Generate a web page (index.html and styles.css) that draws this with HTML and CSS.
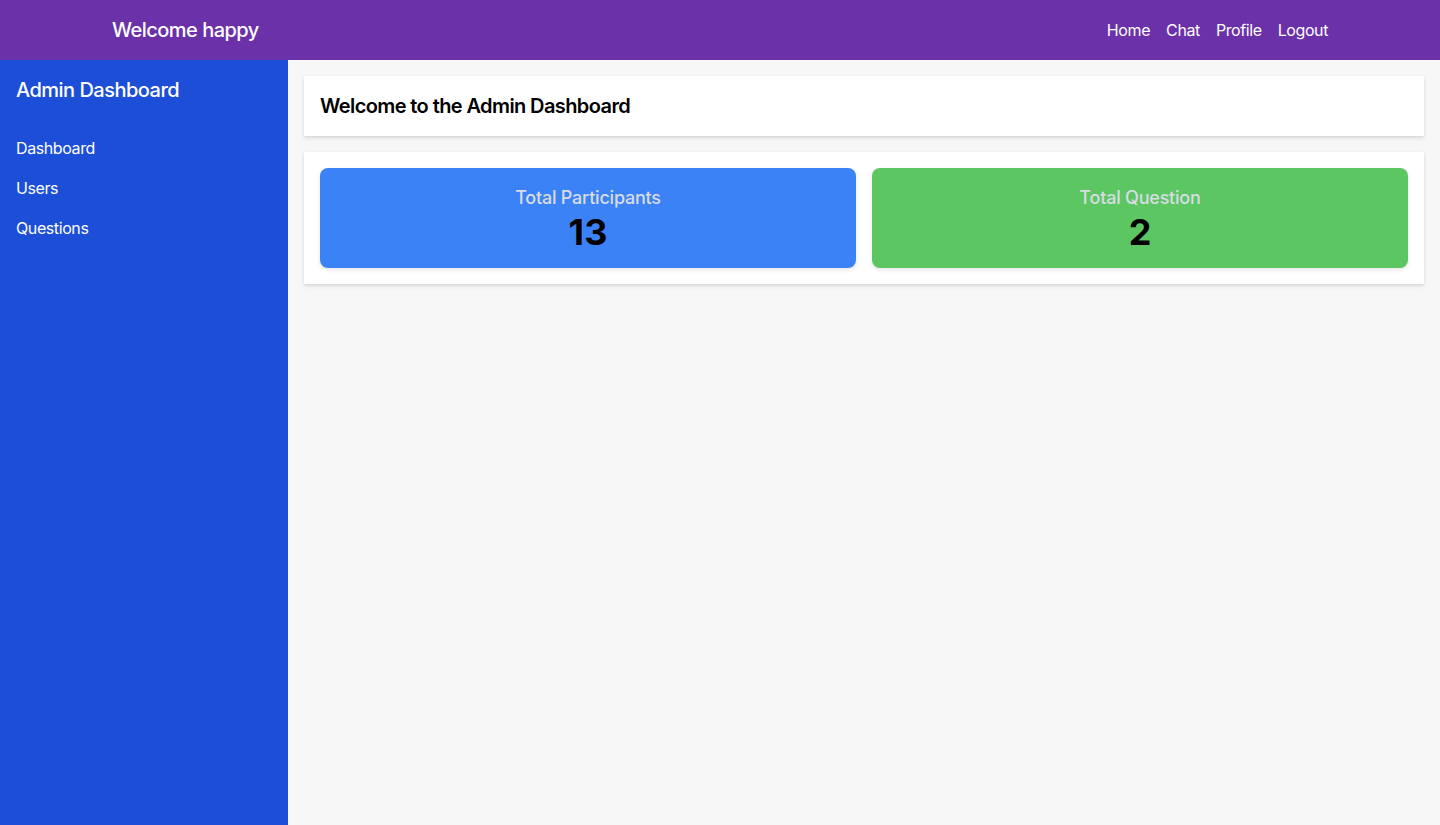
FILE: index.html
```html
<!DOCTYPE html>
<html lang="en">
<head>
<meta charset="utf-8">
<title>Admin Dashboard</title>
<link rel="stylesheet" href="styles.css">
</head>
<body>
<nav class="topbar">
  <div class="topbar-inner">
    <div class="brand">Welcome happy</div>
    <div class="links">
      <a href="#">Home</a>
      <a href="#">Chat</a>
      <a href="#">Profile</a>
      <a href="#">Logout</a>
    </div>
  </div>
</nav>
<div class="layout">
  <aside class="sidebar">
    <h2 class="side-title">Admin Dashboard</h2>
    <ul class="side-links">
      <li><a href="#">Dashboard</a></li>
      <li><a href="#">Users</a></li>
      <li><a href="#">Questions</a></li>
    </ul>
  </aside>
  <main class="main">
    <div class="panel header-panel">
      <h1 class="page-title">Welcome to the Admin Dashboard</h1>
    </div>
    <div class="panel stats-panel">
      <div class="stat stat-blue">
        <div class="stat-label">Total Participants</div>
        <div class="stat-value">13</div>
      </div>
      <div class="stat stat-green">
        <div class="stat-label">Total Question</div>
        <div class="stat-value">2</div>
      </div>
    </div>
  </main>
</div>
</body>
</html>
```
FILE: styles.css
```css
* { box-sizing: border-box; }
html, body { margin: 0; padding: 0; height: 100%; }
body {
  font-family: Inter, "Noto Sans", sans-serif;
  background: #f7f7f7;
  color: #000;
  display: flex;
  flex-direction: column;
}
a { text-decoration: none; color: inherit; }

.topbar {
  background: #6b31a8;
  color: #fff;
  height: 60px;
  flex-shrink: 0;
}
.topbar-inner {
  max-width: 1280px;
  margin: 0 auto;
  padding: 0 32px;
  height: 100%;
  display: flex;
  align-items: center;
  justify-content: space-between;
}
.brand { font-size: 20px; font-weight: 500; line-height: 28px; letter-spacing: -0.026em; }
.links { display: flex; gap: 16px; font-size: 16px; line-height: 24px; letter-spacing: -0.025em; }

.layout { flex: 1; display: flex; min-height: 0; }
.sidebar {
  width: 288px;
  background: #1d4ed8;
  color: #fff;
  padding: 16px;
  flex-shrink: 0;
}
.side-title { margin: 0 0 24px; font-size: 20px; line-height: 28px; font-weight: 500; letter-spacing: -0.026em; }
.side-links { list-style: none; margin: 0; padding: 0; }
.side-links li { padding: 8px 0; font-size: 16px; line-height: 24px; letter-spacing: -0.025em; }

.main {
  flex: 1;
  padding: 16px;
  display: flex;
  flex-direction: column;
  gap: 16px;
}
.panel {
  background: #fff;
  box-shadow: 0 2px 4px rgba(0,0,0,0.1), 0 1px 2px rgba(0,0,0,0.06);
  padding: 16px;
}
.page-title { margin: 0; font-size: 20px; line-height: 28px; font-weight: 600; letter-spacing: -0.03em; }

.stats-panel {
  display: grid;
  grid-template-columns: 1fr 1fr;
  gap: 16px;
}
.stat {
  border-radius: 8px;
  padding: 16px;
  text-align: center;
  box-shadow: 0 2px 4px rgba(0,0,0,0.1);
}
.stat-blue { background: #3b82f6; }
.stat-green { background: #5cc663; }
.stat-label { font-size: 18px; line-height: 28px; font-weight: 500; color: #d8dce3; letter-spacing: -0.012em; }
.stat-value { font-size: 36px; line-height: 40px; font-weight: 700; color: #000; }
```
